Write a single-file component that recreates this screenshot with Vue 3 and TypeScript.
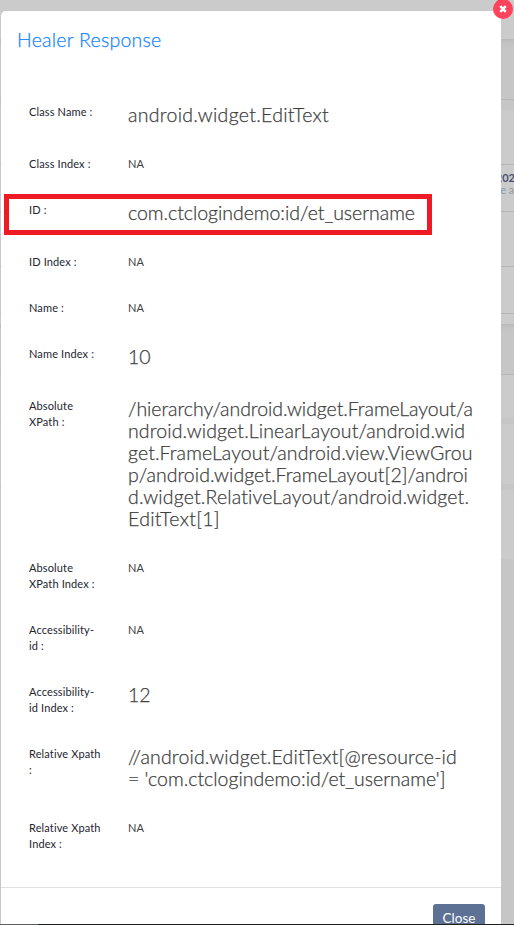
<script setup lang="ts">
interface Line {
  text: string
  width: number
}

interface Row {
  label: string[]
  value: Line[]
  large?: boolean
  marked?: boolean
}

interface Band {
  height: number
  kind: string
}

const na: Line[] = [{ text: 'NA', width: 16 }]

const rows: Row[] = [
  { label: ['Class Name :'], value: [{ text: 'android.widget.EditText', width: 201 }], large: true },
  { label: ['Class Index :'], value: na },
  { label: ['ID :'], value: [{ text: 'com.ctclogindemo:id/et_username', width: 287 }], large: true, marked: true },
  { label: ['ID Index :'], value: na },
  { label: ['Name :'], value: na },
  { label: ['Name Index :'], value: [{ text: '10', width: 22.5 }], large: true },
  {
    label: ['Absolute', 'XPath :'],
    value: [
      { text: '/hierarchy/android.widget.FrameLayout/a', width: 345 },
      { text: 'ndroid.widget.LinearLayout/android.wid', width: 337 },
      { text: 'get.FrameLayout/android.view.ViewGrou', width: 344.5 },
      { text: 'p/android.widget.FrameLayout[2]/androi', width: 340 },
      { text: 'd.widget.RelativeLayout/android.widget.', width: 341.5 },
      { text: 'EditText[1]', width: 92 },
    ],
    large: true,
  },
  { label: ['Absolute', 'XPath Index :'], value: na },
  { label: ['Accessibility-', 'id :'], value: na },
  { label: ['Accessibility-', 'id Index :'], value: [{ text: '12', width: 22.5 }], large: true },
  {
    label: ['Relative Xpath', ':'],
    value: [
      { text: '//android.widget.EditText[@resource-id', width: 329 },
      { text: "= 'com.ctclogindemo:id/et_username']", width: 317.5 },
    ],
    large: true,
  },
  { label: ['Relative Xpath', 'Index :'], value: na },
]

const bands: Band[] = [
  { height: 39, kind: 'card' },
  { height: 60, kind: 'gap shaded' },
  { height: 1, kind: 'line' },
  { height: 10, kind: 'gap' },
  { height: 54, kind: 'card' },
  { height: 1, kind: 'line' },
  { height: 46, kind: 'card note' },
  { height: 1, kind: 'line' },
  { height: 54, kind: 'card' },
  { height: 1, kind: 'line' },
  { height: 46, kind: 'card' },
  { height: 1, kind: 'line' },
  { height: 10, kind: 'card' },
  { height: 50, kind: 'gap shaded' },
  { height: 1, kind: 'line' },
  { height: 43, kind: 'card' },
  { height: 6, kind: 'gap' },
  { height: 60, kind: 'card' },
  { height: 6, kind: 'gap' },
  { height: 69, kind: 'card' },
  { height: 366, kind: 'gap' },
]

// Spreads a line's letters evenly until it has the given width.
const vFit = {
  mounted(el: HTMLElement, binding: { value: number }) {
    const count = (el.textContent ?? '').length
    const natural = el.getBoundingClientRect().width
    el.style.letterSpacing = `${(binding.value - natural) / count}px`
  },
}
</script>

<template>
  <div class="screen">
    <div class="backdrop">
      <div v-for="(band, i) in bands" :key="i" class="band" :class="band.kind" :style="{ height: band.height + 'px' }">
        <template v-if="band.kind === 'card note'">
          <span class="year">202</span>
          <span class="sub">e a</span>
        </template>
      </div>
    </div>

    <section class="modal">
      <button class="dismiss" aria-label="Close">
        <svg width="8" height="8" viewBox="0 0 8 8">
          <path d="M1.3 1.1 6.7 6.9M6.7 1.1 1.3 6.9" fill="none" stroke="#fff" stroke-width="2.5" />
        </svg>
      </button>
      <header class="head"><span v-fit="144.5">Healer Response</span></header>
      <div class="body">
        <div v-for="(row, i) in rows" :key="i" class="row" :class="{ marked: row.marked }">
          <div class="label">
            <div v-for="line in row.label" :key="line">{{ line }}</div>
          </div>
          <div class="value" :class="{ large: row.large }">
            <div v-for="line in row.value" :key="line.text">
              <span v-fit="line.width">{{ line.text }}</span>
            </div>
          </div>
        </div>
      </div>
      <footer class="foot">
        <button class="close">Close</button>
      </footer>
    </section>
    <div class="edge"></div>
  </div>
</template>

<style>
body {
  margin: 0;
  overflow: hidden;
}
</style>

<style scoped>
.screen {
  position: relative;
  width: 514px;
  height: 925px;
  overflow: hidden;
  box-sizing: border-box;
  padding: 11px 13px 0 1px;
  background: #c6c6c6;
  font-family: Lato, 'Noto Sans', sans-serif;
}
.backdrop {
  position: absolute;
  inset: 0;
}
.band {
  display: flex;
  flex-direction: column;
  align-items: flex-end;
  box-sizing: border-box;
}
.card {
  background: #cbcbcb;
}
.gap {
  background: #c6c6c6;
}
.shaded {
  background: linear-gradient(#b9b9b9, #c3c3c3 4px, #c6c6c6 10px);
}
.line {
  background: #b4b6b8;
}
.note {
  padding-top: 6px;
  font-size: 10.5px;
  line-height: 13px;
  white-space: nowrap;
}
.year {
  font-weight: 700;
  color: #4c5070;
  font-size: 11px;
  margin-right: -1px;
}
.sub {
  color: #8f97aa;
}
.modal {
  position: relative;
  height: 930px;
  background: #fff;
  border-radius: 5px 0 0 0;
}
.dismiss {
  position: absolute;
  top: -12px;
  right: -12px;
  width: 20px;
  height: 20px;
  padding: 0;
  border: 0;
  border-radius: 50%;
  background: #ff435d;
  display: flex;
  align-items: center;
  justify-content: center;
}
.head {
  padding: 16px 16px 0;
  height: 77px;
  box-sizing: content-box;
  font-size: 19.5px;
  font-weight: 300;
  line-height: 26px;
  color: #1585ff;
  -webkit-text-stroke: 0.25px #1585ff;
}
.body {
  display: flex;
  flex-direction: column;
  gap: 30px;
  padding: 0 28px 35px;
}
.row {
  position: relative;
  display: grid;
  grid-template-columns: 99px 1fr;
}
.marked::before {
  content: '';
  position: absolute;
  left: -25px;
  top: -8px;
  width: 418px;
  height: 31px;
  border: 5px solid #ef1b24;
}
.label,
.value {
  font-size: 11px;
  line-height: 16px;
  color: #24252f;
  white-space: nowrap;
}
.label {
  letter-spacing: 0.13px;
}
.value {
  color: #404040;
}
.value.large {
  font-size: 19.5px;
  font-weight: 300;
  line-height: 22px;
  -webkit-text-stroke: 0.25px #404040;
}
.foot {
  display: flex;
  justify-content: flex-end;
  border-top: 1px solid #dedfe0;
  padding: 16px 16px 0;
}
.close {
  width: 52px;
  height: 28px;
  padding: 0;
  border: 0;
  border-radius: 3px;
  background: #5d7195;
  color: #fff;
  font-family: inherit;
  font-size: 13.5px;
  line-height: 28px;
}
.edge {
  position: absolute;
  left: 0;
  right: 0;
  bottom: 0;
  height: 1px;
  background: linear-gradient(90deg, #5e5e62 38px, #202125 38px);
}
</style>
